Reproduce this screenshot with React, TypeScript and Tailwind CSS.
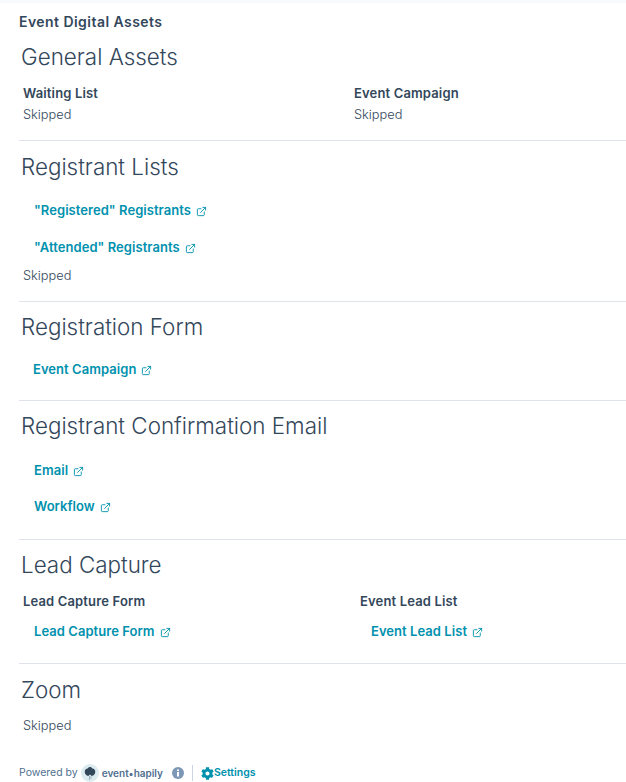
import React from 'react'
import { ExternalLink } from 'lucide-react'
import { FaCog } from 'react-icons/fa'

function Heading({ children, className }: { children: React.ReactNode; className?: string }) {
  return <h2 className={`ml-[21px] text-[22.4px] leading-[30px] font-light text-[#33475b] ${className ?? ''}`}>{children}</h2>
}

function AssetLink({ label, className }: { label: string; className?: string }) {
  return (
    <div className={`flex h-[20px] items-center text-[13px] font-semibold tracking-[0.05px] text-[#0091ae] ${className ?? ''}`}>
      <span>{label}</span>
      <ExternalLink className="ml-[5px] size-[11px]" strokeWidth={2} />
    </div>
  )
}

function Label({ children }: { children: React.ReactNode }) {
  return <div className="h-[20px] text-[13px] leading-[20px] font-semibold tracking-[0.15px] text-[#33475b]">{children}</div>
}

function Skipped() {
  return <div className="h-[20px] text-[12.8px] leading-[20px] font-light text-[#33475b]">Skipped</div>
}

function App() {
  return (
    <div className="h-[782px] w-[626px] overflow-hidden bg-white font-['Inter','Lato',sans-serif]">
      <div className="h-[3px] bg-[#f8f9fb]" />
      <div className="mt-[9px] ml-[19px] h-[20px] text-[14px] leading-[20px] font-semibold tracking-[0.45px] text-[#33475b]">Event Digital Assets</div>

      <Heading className="mt-[10px]">General Assets</Heading>
      <div className="mt-[11px] ml-[23px] grid grid-cols-[331px_1fr]">
        <div>
          <Label>Waiting List</Label>
          <div className="mt-[2px]"><Skipped /></div>
        </div>
        <div>
          <Label>Event Campaign</Label>
          <div className="mt-[2px]"><Skipped /></div>
        </div>
      </div>
      <hr className="mt-[15px] ml-[19px] border-[#dfe3eb]" />

      <Heading className="mt-[11px]">Registrant Lists</Heading>
      <AssetLink label={'"Registered" Registrants'} className="mt-[19px] ml-[34px]" />
      <AssetLink label={'"Attended" Registrants'} className="mt-[17px] ml-[34px]" />
      <div className="mt-[8px] ml-[23px]"><Skipped /></div>
      <hr className="mt-[15px] ml-[19px] border-[#dfe3eb]" />

      <Heading className="mt-[10px]">Registration Form</Heading>
      <AssetLink label="Event Campaign" className="mt-[18px] ml-[33px]" />
      <hr className="mt-[20px] ml-[19px] border-[#dfe3eb]" />

      <Heading className="mt-[10px]">Registrant Confirmation Email</Heading>
      <AssetLink label="Email" className="mt-[20px] ml-[34px]" />
      <AssetLink label="Workflow" className="mt-[16px] ml-[34px]" />
      <hr className="mt-[22px] ml-[19px] border-[#dfe3eb]" />

      <Heading className="mt-[10px]">Lead Capture</Heading>
      <div className="mt-[11px] ml-[23px] grid grid-cols-[337px_1fr]">
        <div>
          <Label>Lead Capture Form</Label>
          <AssetLink label="Lead Capture Form" className="mt-[11px] ml-[11px]" />
        </div>
        <div>
          <Label>Event Lead List</Label>
          <AssetLink label="Event Lead List" className="mt-[11px] ml-[11px]" />
        </div>
      </div>
      <hr className="mt-[21px] ml-[19px] border-[#dfe3eb]" />

      <Heading className="mt-[11px]">Zoom</Heading>
      <div className="mt-[11px] ml-[23px]"><Skipped /></div>

      <div className="mt-[29px] ml-[19px] flex h-[16px] items-center text-[10.5px] text-[#516f90]">
        <span>Powered by</span>
        <svg viewBox="0 0 18 18" className="ml-[3px] size-[18px]">
          <circle cx="9" cy="9" r="9" fill="#dcebf0" />
          <path d="M8.5 12v4M10 12v3" stroke="#9fb4c2" strokeWidth="1" />
          <path d="M9 3c1 0 2 .7 2.4 1.6C13 4.8 14.3 6 14.3 7.8c0 2-1.5 3.9-3.6 4.2L9 10.6 7.3 12C5.2 11.700 3.700 9.800 3.700 7.800c0-1.800 1.300-3 2.900-3.200C7 3.700 8 3 9 3z" fill="#33475b" />
        </svg>
        <span className="ml-[3px] text-[10px] font-semibold text-[#516f90]">event•hapily</span>
        <svg viewBox="0 0 12 12" className="ml-[9px] size-[12px]">
          <circle cx="6" cy="6" r="6" fill="#7c98b6" />
          <rect x="5" y="5" width="2" height="4.5" fill="#fff" />
          <rect x="5" y="2.5" width="2" height="1.6" fill="#fff" />
        </svg>
        <div className="mx-[8px] h-[16px] w-px bg-[#cbd6e2]" />
        <FaCog className="size-[13px] text-[#0091ae]" />
        <span className="font-semibold text-[#0091ae]">Settings</span>
      </div>
      <div className="mt-[1px] h-[3px] bg-[#f8f9fb]" />
    </div>
  )
}

export default App
